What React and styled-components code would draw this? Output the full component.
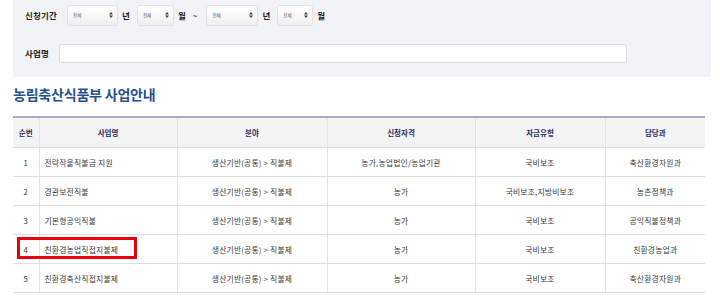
import React from "react";
import styled, { createGlobalStyle } from "styled-components";

const GlobalStyle = createGlobalStyle`
  body {
    margin: 0;
    background: #fff;
    font-family: "Noto Sans CJK KR", "Noto Sans", sans-serif;
  }
`;

const rows = [
  { no: 1, name: "전략작물직불금 지원", field: "생산기반(공통) > 직불제", who: "농가,농업법인/농업기관", fund: "국비보조", dept: "축산환경자원과" },
  { no: 2, name: "경관보전직불", field: "생산기반(공통) > 직불제", who: "농가", fund: "국비보조,지방비보조", dept: "농촌정책과" },
  { no: 3, name: "기본형공익직불", field: "생산기반(공통) > 직불제", who: "농가", fund: "국비보조", dept: "공익직불정책과" },
  { no: 4, name: "친환경농업직접지불제", field: "생산기반(공통) > 직불제", who: "농가", fund: "국비보조", dept: "친환경농업과" },
  { no: 5, name: "친환경축산직접지불제", field: "생산기반(공통) > 직불제", who: "농가", fund: "국비보조", dept: "축산환경자원과" },
];

const columns = [
  { title: "순번", width: 26 },
  { title: "사업명", width: 138 },
  { title: "분야", width: 150 },
  { title: "신청자격", width: 148 },
  { title: "자금유형", width: 130 },
  { title: "담당과", width: 100 },
];

const Arrow = () => (
  <svg width="4" height="6" viewBox="0 0 4 6">
    <path d="M0 2.4 L2 0 L4 2.4 Z M0 3.6 L2 6 L4 3.6 Z" fill="#444" />
  </svg>
);

const Select = ({ width }) => (
  <SelectBox $width={width}>
    <span>전체</span>
    <Arrow />
  </SelectBox>
);

const App = () => {
  return (
    <>
      <GlobalStyle />
      <SearchPanel>
        <FormRow>
          <Label>신청기간</Label>
          <Select width={51} />
          <Unit>년</Unit>
          <Select width={37} />
          <Unit>월</Unit>
          <Tilde>~</Tilde>
          <Select width={52} />
          <Unit>년</Unit>
          <Select width={36} />
          <Unit>월</Unit>
        </FormRow>
        <FormRow $top={16}>
          <Label>사업명</Label>
          <TextInput />
        </FormRow>
      </SearchPanel>

      <Title>농림축산식품부 사업안내</Title>

      <TableWrap>
        <Table>
          <colgroup>
            {columns.map((c) => (
              <col key={c.title} style={{ width: c.width }} />
            ))}
          </colgroup>
          <thead>
            <tr>
              {columns.map((c) => (
                <Th key={c.title}>{c.title}</Th>
              ))}
            </tr>
          </thead>
          <tbody>
            {rows.map((r) => (
              <tr key={r.no}>
                <Td>{r.no}</Td>
                <Td $left>{r.name}</Td>
                <Td>{r.field}</Td>
                <Td>{r.who}</Td>
                <Td>{r.fund}</Td>
                <Td>{r.dept}</Td>
              </tr>
            ))}
          </tbody>
        </Table>
        <Highlight />
      </TableWrap>
    </>
  );
};

const SearchPanel = styled.div`
  margin: 0 9px 0 13px;
  padding: 4px 12px 13px;
  background: #f2f3f7;
  border-radius: 0 0 2px 2px;
`;

const FormRow = styled.div`
  display: flex;
  align-items: center;
  height: 22px;
  margin-top: ${(p) => p.$top || 0}px;
`;

const Label = styled.span`
  font-size: 8.5px;
  font-weight: 700;
  color: #222;
  margin-right: 10px;
  letter-spacing: 0.2px;
`;

const SelectBox = styled.div`
  box-sizing: border-box;
  width: ${(p) => p.$width}px;
  height: 21px;
  display: flex;
  align-items: center;
  justify-content: space-between;
  padding: 0 4px 0 5px;
  background: linear-gradient(#ffffff, #f0f0f0);
  border: 1px solid #e2e2e2;
  border-radius: 3px;

  span {
    font-size: 4.5px;
    color: #555;
  }
`;

const Unit = styled.span`
  font-size: 8.5px;
  font-weight: 700;
  color: #222;
  margin: 0 7px 0 4px;
`;

const Tilde = styled.span`
  font-size: 8px;
  font-weight: 700;
  color: #444;
  margin: 0 9px 0 0;
`;

const TextInput = styled.div`
  box-sizing: border-box;
  width: 568px;
  height: 19px;
  background: #fff;
  border: 1px solid #dcdde1;
  border-radius: 2px;
`;

const Title = styled.h2`
  margin: 7px 0 0 13px;
  font-size: 14px;
  line-height: 20px;
  font-weight: 700;
  color: #25528f;
  letter-spacing: -0.2px;
`;

const TableWrap = styled.div`
  position: relative;
  margin: 12px 0 0 13px;
  width: 692px;
`;

const Table = styled.table`
  width: 692px;
  table-layout: fixed;
  border-collapse: collapse;
  border-top: 2px solid #a6abc9;
`;

const Th = styled.th`
  height: 29px;
  padding: 0;
  background: #f4f4f5;
  font-size: 7.5px;
  font-weight: 700;
  color: #2b2f63;
  text-align: center;
  border-left: 1px solid #e3e3e6;
  &:first-child {
    border-left: none;
  }
`;

const Td = styled.td`
  height: 28px;
  padding: ${(p) => (p.$left ? "0 0 0 5px" : "0")};
  font-size: 7.8px;
  color: #3a3a3a;
  text-align: ${(p) => (p.$left ? "left" : "center")};
  border-top: 1px solid #dedee2;
  border-left: 1px solid #e3e3e6;
  border-bottom: 1px solid #dedee2;
  white-space: nowrap;
  letter-spacing: 0.2px;
  &:first-child {
    border-left: none;
  }
`;

const Highlight = styled.div`
  position: absolute;
  left: 4px;
  top: 121px;
  width: 120px;
  height: 22px;
  box-sizing: border-box;
  border: 3px solid #e8000e;
`;

export default App;
